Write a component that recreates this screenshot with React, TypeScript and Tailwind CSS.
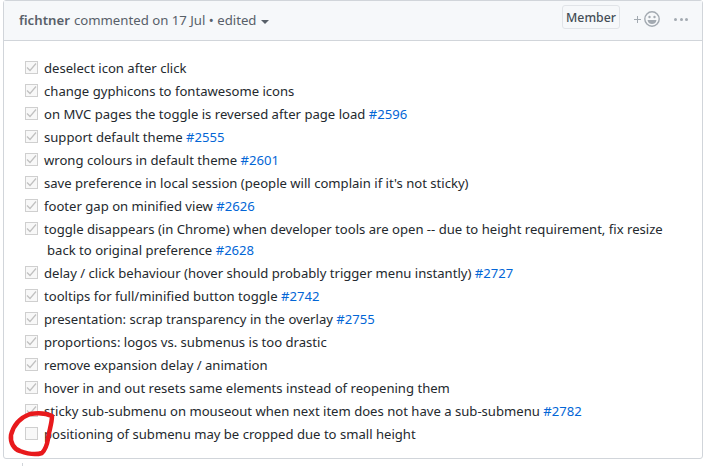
import React from 'react'

const link = 'text-[#0366d6]'

const items: { text: string; wrap?: string; ref?: string; done?: boolean }[] = [
    { text: 'deselect icon after click', done: true },
    { text: 'change gyphicons to fontawesome icons', done: true },
    { text: 'on MVC pages the toggle is reversed after page load', ref: '#2596', done: true },
    { text: 'support default theme', ref: '#2555', done: true },
    { text: 'wrong colours in default theme', ref: '#2601', done: true },
    { text: "save preference in local session (people will complain if it's not sticky)", done: true },
    { text: 'footer gap on minified view', ref: '#2626', done: true },
    { text: 'toggle disappears (in Chrome) when developer tools are open -- due to height requirement, fix resize', wrap: 'back to original preference', ref: '#2628', done: true },
    { text: 'delay / click behaviour (hover should probably trigger menu instantly)', ref: '#2727', done: true },
    { text: 'tooltips for full/minified button toggle', ref: '#2742', done: true },
    { text: 'presentation: scrap transparency in the overlay', ref: '#2755', done: true },
    { text: 'proportions: logos vs. submenus is too drastic', done: true },
    { text: 'remove expansion delay / animation', done: true },
    { text: 'hover in and out resets same elements instead of reopening them', done: true },
    { text: 'sticky sub-submenu on mouseout when next item does not have a sub-submenu', ref: '#2782', done: true },
    { text: 'positioning of submenu may be cropped due to small height' },
]

const Check = ({ done }: { done?: boolean }) => (
    <span className="absolute left-[-19px] top-[3px] w-[13px] h-[13px] border border-[#cfcfcf] bg-[#f8f8f8] flex items-center justify-center">
        {done && (
            <svg width="11" height="11" viewBox="0 0 11 11" fill="none">
                <path d="M1 5.5 L4 8.5 L10 1.5" stroke="#c0c0c0" strokeWidth="1.2" />
            </svg>
        )}
    </span>
)

const App = () => {
    return (
        <div className="relative w-[717px] h-[466px] bg-white overflow-hidden font-['Noto_Sans',sans-serif] text-[13.2px] text-[#24292e]">
            <div className="ml-[3px] w-[700px] h-[459px] border border-[#d1d5da] rounded-[3px]">
                <div className="h-[40px] bg-[#f6f8fa] border-b border-[#d1d5da] flex items-center pl-[15px] pr-[14px] text-[#586069]">
                    <span className="font-semibold">fichtner</span>
                    <span className="ml-[4px]">commented on 17 Jul • edited</span>
                    <span className="ml-[5px] mt-[2px] border-x-[4px] border-x-transparent border-t-[4px] border-t-[#586069]"></span>
                    <span className="ml-auto mt-[-7px] h-[24px] w-[58px] pt-[2px] border border-[#e1e4e8] rounded-[3px] text-[12.3px] font-medium text-[#444d56] flex items-center justify-center">Member</span>
                    <span className="ml-[14px] mt-[-3px] flex items-center">
                        <svg width="27" height="18" viewBox="0 0 27 18" fill="none">
                            <path d="M0 9.5 H7 M3.5 6 V13" stroke="#a3aab1" strokeWidth="1" />
                            <circle cx="18" cy="9" r="7.2" stroke="#a3aab1" strokeWidth="1.4" />
                            <circle cx="15.5" cy="7" r="1.2" fill="#a3aab1" />
                            <circle cx="20.5" cy="7" r="1.2" fill="#a3aab1" />
                            <path d="M13.5 10 H22.5 C22 13 20 14 18 14 C16 14 14 13 13.5 10 Z" fill="#a3aab1" />
                        </svg>
                    </span>
                    <span className="ml-[13px] mt-[-3px] flex gap-[2.5px]">
                        <i className="w-[3px] h-[3px] rounded-full bg-[#a3aab1]"></i>
                        <i className="w-[3px] h-[3px] rounded-full bg-[#a3aab1]"></i>
                        <i className="w-[3px] h-[3px] rounded-full bg-[#a3aab1]"></i>
                    </span>
                </div>
                <ul className="pt-[17px] pl-[40px] pr-[10px] text-[13.1px]">
                    {items.map((item) => (
                        <li key={item.text} className="relative leading-[21px] mb-[2px] whitespace-nowrap">
                            <Check done={item.done} />
                            {item.text}
                            {item.wrap && <div className="pl-[3px]">{item.wrap} <span className={link}>{item.ref}</span></div>}
                            {item.ref && !item.wrap && <span className={link}> {item.ref}</span>}
                        </li>
                    ))}
                </ul>
            </div>
            <div className="absolute left-[22px] top-[463px] w-[1px] h-[3px] bg-[#d1d5da]"></div>
            <svg className="absolute left-0 top-[405px]" width="60" height="61" viewBox="0 0 60 61" fill="none">
                <path d="M52 11 C46 8 36 8 30 9 C22 12 14 18 11 30 C10 38 14 44 20 46 C28 49 36 50 42 48 C46 44 47 40 48 34 C49 26 52 18 52 11 Z" stroke="#e8191c" strokeWidth="4.5" strokeLinecap="round" strokeLinejoin="round" />
            </svg>
        </div>
    )
}

export default App
